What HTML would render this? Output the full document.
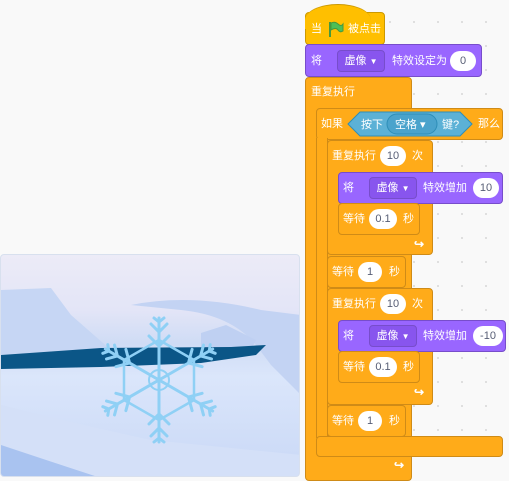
<!DOCTYPE html>
<html><head><meta charset="utf-8"><style>
body{margin:0;width:509px;height:477px;overflow:hidden;background:#f9f9f9;position:relative;font-family:"Liberation Sans","Noto Sans CJK SC",sans-serif;font-size:11px;color:#fff}
.grid{position:absolute;left:300px;top:0;width:209px;height:477px;background:#f9f9f9;background-image:radial-gradient(#ddd 1px,transparent 1.2px);background-size:24px 24px;background-position:6px 10px}
.b{position:absolute;box-sizing:border-box;border:1px solid #cf8b17;background:#ffab19;border-radius:4px}
.p{background:#9966ff;border-color:#774dcb}
.h{background:#ffbf00;border-color:#cc9900}
.t{position:absolute;white-space:nowrap;line-height:20px;height:20px}
.t span,.t i{position:absolute;top:0;font-style:normal}
.o{background:#fff;color:#575e75;border-radius:10px;height:20px;box-sizing:border-box;text-align:center;line-height:20px;font-size:11px}
.d{background:#8855ee;border:1px solid #774dcb;border-radius:4px;height:22px;top:-1px!important;box-sizing:border-box;line-height:20px;text-align:center;width:48px}
.ar{font-size:8px}
.lp{position:absolute;font-size:12px;color:#fff;font-weight:bold}
</style></head><body>
<div class="grid"></div>
<!-- stage -->
<div style="position:absolute;left:0;top:254px;width:300px;height:223px;border:1px solid #d8e0ee;border-radius:4px;box-sizing:border-box;overflow:hidden;background:linear-gradient(#ecebf7 0%,#e3e5f7 25%,#cfdcf5 40%,#dbe6fb 55%,#c9d8f6 100%)">
<svg width="300" height="223" style="position:absolute;left:0;top:0">
<path d="M0 35 L50 33 L70 60 L110 95 L0 100Z" fill="#c6d6f4"/>
<path d="M130 50 Q190 38 260 55 L300 60 L300 140 L270 110 L255 90 Q230 60 180 55Z" fill="#c3d3f3"/>
<path d="M200 78 L225 70 L255 85 L250 95 L200 95Z" fill="#bfd0f2"/>
<path d="M0 100 L100 93 L230 92 L265 90 L255 100 L200 108 L100 112 L0 114Z" fill="#0b5687"/>
<path d="M0 150 Q80 170 150 185 L300 200 L300 223 L0 223Z" fill="#d4e0f8"/>
<path d="M0 190 Q60 210 100 223 L0 223Z" fill="#a9c3f0"/>
<g stroke="#8fd0f5" stroke-width="3" fill="none" stroke-linecap="round" transform="translate(158,125)">
<g id="arm"><path d="M0 0V-62M-8 -56L0 -48L8 -56M-10 -44L0 -34L10 -44M-5 -62L0 -58L5 -62"/></g>
<use href="#arm" transform="rotate(60)"/><use href="#arm" transform="rotate(120)"/><use href="#arm" transform="rotate(180)"/><use href="#arm" transform="rotate(240)"/><use href="#arm" transform="rotate(300)"/>
<polygon points="0,-40 35,-20 35,20 0,40 -35,20 -35,-20" stroke-width="2.5"/>
<circle r="10" stroke-width="2"/>
</g>
</svg></div>
<!-- outer repeat -->
<div class="b" style="left:305px;top:77px;width:107px;height:400px;border-radius:4px 4px 0 4px"></div>
<div class="b" style="left:305px;top:456px;width:107px;height:25px;border-top:none;border-radius:0 0 4px 4px"></div>
<div class="t" style="left:311px;top:82px">重复执行</div>
<div class="lp" style="left:394px;top:458px">↪</div>
<!-- if -->
<div class="b" style="left:316px;top:108px;width:187px;height:32px"></div>
<div class="b" style="left:316px;top:138px;width:12px;height:300px;border-radius:0;border-top:none;border-bottom:none"></div>
<div class="b" style="left:316px;top:436px;width:187px;height:21px"></div>
<div class="t" style="left:321px;top:114px">如果</div>
<svg width="126" height="26" style="position:absolute;left:347px;top:111px"><polygon points="1,13 13,1 113,1 125,13 113,25 13,25" fill="#5cb1d6" stroke="#2e8eb8"/><text x="14" y="17" fill="#fff" font-size="11" font-family="Liberation Sans,Noto Sans CJK SC,sans-serif">按下</text><rect x="40" y="3" width="50" height="20" rx="10" fill="#4aa3cc" stroke="#2e8eb8"/><text x="48" y="17" fill="#fff" font-size="11" font-family="Liberation Sans,Noto Sans CJK SC,sans-serif">空格 ▾</text><text x="95" y="17" fill="#fff" font-size="11" font-family="Liberation Sans,Noto Sans CJK SC,sans-serif">键?</text></svg>
<div class="t" style="left:478px;top:114px">那么</div>
<!-- repeat 1 -->
<div class="b" style="left:327px;top:140px;width:106px;height:115px"></div>
<div class="t" style="left:332px;top:146px">重复执行<span class="o" style="left:48px;width:26px">10</span><i style="left:80px">次</i></div>
<div class="b p" style="left:338px;top:172px;width:165px;height:32px"></div>
<div class="t" style="left:343px;top:178px">将<span class="d" style="left:26px">虚像 <b class="ar">▼</b></span><i style="left:80px">特效增加</i><span class="o" style="left:130px;width:26px">10</span></div>
<div class="b" style="left:338px;top:203px;width:82px;height:32px"></div>
<div class="t" style="left:343px;top:209px">等待<span class="o" style="left:26px;width:28px">0.1</span><i style="left:60px">秒</i></div>
<div class="lp" style="left:414px;top:237px">↪</div>
<!-- wait 1 -->
<div class="b" style="left:327px;top:256px;width:79px;height:32px"></div>
<div class="t" style="left:332px;top:262px">等待<span class="o" style="left:26px;width:24px">1</span><i style="left:57px">秒</i></div>
<!-- repeat 2 -->
<div class="b" style="left:327px;top:288px;width:106px;height:117px"></div>
<div class="t" style="left:332px;top:294px">重复执行<span class="o" style="left:48px;width:26px">10</span><i style="left:80px">次</i></div>
<div class="b p" style="left:338px;top:320px;width:168px;height:32px"></div>
<div class="t" style="left:343px;top:326px">将<span class="d" style="left:26px">虚像 <b class="ar">▼</b></span><i style="left:80px">特效增加</i><span class="o" style="left:130px;width:30px">-10</span></div>
<div class="b" style="left:338px;top:351px;width:82px;height:32px"></div>
<div class="t" style="left:343px;top:357px">等待<span class="o" style="left:26px;width:28px">0.1</span><i style="left:60px">秒</i></div>
<div class="lp" style="left:414px;top:385px">↪</div>
<!-- wait 1 -->
<div class="b" style="left:327px;top:405px;width:79px;height:32px"></div>
<div class="t" style="left:332px;top:411px">等待<span class="o" style="left:26px;width:24px">1</span><i style="left:57px">秒</i></div>
<!-- hat -->
<div class="b h" style="left:305px;top:12px;width:80px;height:33px;border-radius:4px"></div>
<div style="position:absolute;left:305px;top:4px;width:66px;height:24px;background:#ffbf00;border-radius:33px 33px 0 0/16px 16px 0 0;border-top:1px solid #cc9900"></div>
<div class="t" style="left:311px;top:19px">当<svg width="16" height="18" style="position:absolute;left:17px;top:1px"><path d="M2 2V17" stroke="#45993d" stroke-width="2"/><path d="M3 3Q7 1 10 4T15 4V11Q12 13 10 10T3 10Z" fill="#4cbf56" stroke="#45993d"/></svg><i style="left:37px">被点击</i></div>
<!-- set -->
<div class="b p" style="left:305px;top:44px;width:177px;height:33px"></div>
<div class="t" style="left:311px;top:51px">将<span class="d" style="left:26px">虚像 <b class="ar">▼</b></span><i style="left:81px">特效设定为</i><span class="o" style="left:139px;width:26px">0</span></div>
</body></html>
